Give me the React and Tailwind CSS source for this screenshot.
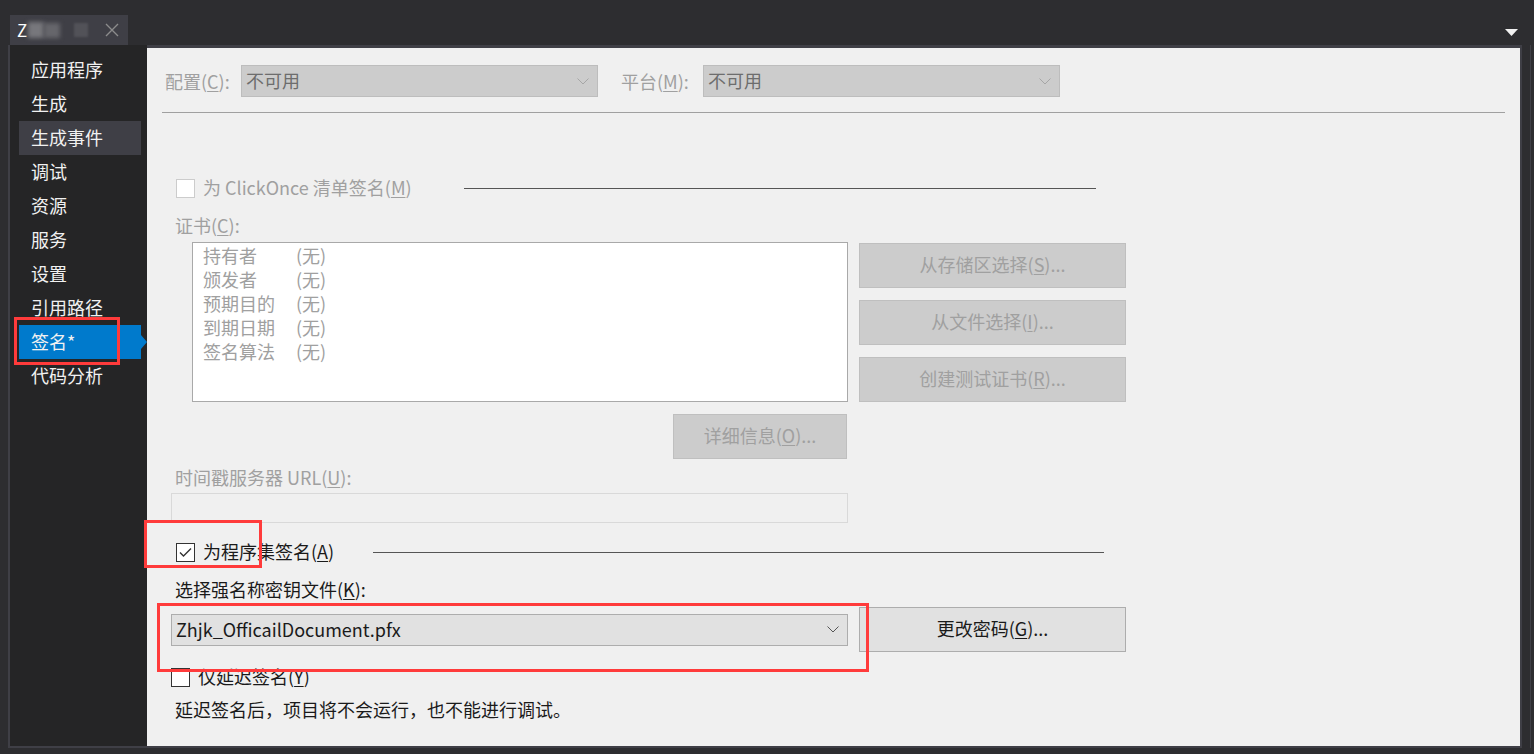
import React from "react";

const navItems = ["应用程序", "生成", "生成事件", "调试", "资源", "服务", "设置", "引用路径", "签名*", "代码分析"];

const certRows = [
  ["持有者", "(无)"],
  ["颁发者", "(无)"],
  ["预期目的", "(无)"],
  ["到期日期", "(无)"],
  ["签名算法", "(无)"],
];

function Chevron({ color }) {
  return (
    <svg width="12" height="7" viewBox="0 0 12 7" className="shrink-0">
      <polyline points="0.5,0.5 6,6 11.5,0.5" fill="none" stroke={color} strokeWidth="1" />
    </svg>
  );
}

function Combo({ w, text, disabled }) {
  return (
    <div
      className={`h-[32px] ${w} flex items-center justify-between pl-[4px] pr-[8px] border ${
        disabled ? "bg-[#cccccc] border-[#bdbdbd] text-[#6d6d6d]" : "bg-[#e1e1e1] border-[#adadad] text-[#1a1a1a]"
      }`}
    >
      <span className="leading-[30px] -translate-y-px">{text}</span>
      <Chevron color={disabled ? "#a6a6a6" : "#555555"} />
    </div>
  );
}

function Button({ children, disabled, w = "w-[267px]" }) {
  return (
    <div
      className={`h-[45px] ${w} flex items-center justify-center border ${
        disabled ? "bg-[#cccccc] border-[#bfbfbf] text-[#a0a0a0]" : "bg-[#e1e1e1] border-[#adadad] text-[#1a1a1a]"
      }`}
    >
      <span className="-translate-y-px">{children}</span>
    </div>
  );
}

function Check({ checked, disabled }) {
  return (
    <div
      className={`w-[19px] h-[19px] shrink-0 border flex items-center justify-center ${
        disabled ? "bg-white border-[#cccccc]" : "bg-white border-[#333333]"
      }`}
    >
      {checked && (
        <svg width="13" height="11" viewBox="0 0 13 11">
          <polyline points="1,5.5 4.5,9 12,1.5" fill="none" stroke="#333333" strokeWidth="1.4" />
        </svg>
      )}
    </div>
  );
}

export default function App() {
  return (
    <div className="w-[1534px] h-[754px] bg-[#2d2d30] flex flex-col overflow-hidden relative font-['Noto_Sans_CJK_SC',sans-serif] text-[18px]">
      {/* 顶部标签 */}
      <div className="h-[45px] flex items-end justify-between shrink-0">
        <div className="ml-[10px] w-[118px] h-[30px] bg-[#3f3f46] flex items-center pl-[7px]">
          <span className="text-white text-[17px] leading-[30px]">Z</span>
          <span className="ml-[1px] w-[16px] h-[16px] bg-[#77777c] blur-[2px]" />
          <span className="w-[16px] h-[15px] bg-[#66666b] blur-[2px]" />
          <span className="ml-[14px] w-[14px] h-[14px] bg-[#525258] blur-[1px]" />
          <svg width="14" height="14" viewBox="0 0 14 14" className="ml-[17px]">
            <path d="M1 1 L13 13 M13 1 L1 13" stroke="#8c8c8c" strokeWidth="1.4" />
          </svg>
        </div>
        <svg width="13" height="7" viewBox="0 0 13 7" className="mb-[9px] mr-[16px]">
          <polygon points="0,0 13,0 6.5,7" fill="#f1f1f1" />
        </svg>
      </div>

      <div className="flex h-[703px]">
        <div className="ml-[8px] w-[1514px] h-full bg-[#3f3f46] pl-[2px] pr-[2px] pb-[2px] flex">
          {/* 侧边栏 */}
          <div className="w-[137px] h-full bg-[#252526] pt-[8px] flex flex-col">
            {navItems.map((item) => {
              const active = item === "签名*";
              const hover = item === "生成事件";
              return (
                <div
                  key={item}
                  className={`relative ml-[9px] w-[122px] h-[34px] flex items-center pl-[12px] text-[#f1f1f1] ${
                    active ? "bg-[#007acc]" : hover ? "bg-[#3f3f46] w-[121px]" : ""
                  }`}
                >
                  <span className="leading-[34px] -translate-y-px">{item}</span>
                  {active && (
                    <svg width="6" height="14" viewBox="0 0 6 14" className="absolute right-[-6px] top-[10px]">
                      <polygon points="0,0 6,7 0,14" fill="#007acc" />
                    </svg>
                  )}
                </div>
              );
            })}
          </div>

          {/* 内容区 */}
          <div className="mt-[3px] w-[1373px] h-[698px] bg-[#f0f0f0] pt-[17px] pl-[15px] pr-[15px]">
            <div className="flex items-center h-[32px]">
              <span className="ml-[3px] w-[76px] text-[#a0a0a0]">
                配置(<u className="underline-offset-2">C</u>):
              </span>
              <Combo w="w-[357px]" text="不可用" disabled />
              <span className="ml-[23px] w-[82px] text-[#a0a0a0]">
                平台(<u className="underline-offset-2">M</u>):
              </span>
              <Combo w="w-[357px]" text="不可用" disabled />
            </div>
            <div className="mt-[15px] h-px bg-[#a0a0a0]" />

            {/* ClickOnce */}
            <div className="mt-[65px] ml-[14px] flex items-center h-[20px]">
              <Check disabled />
              <span className="ml-[8px] w-[261px] text-[#a0a0a0] leading-[20px] -translate-y-px">
                为 ClickOnce 清单签名(<u className="underline-offset-2">M</u>)
              </span>
              <div className="w-[632px] h-px bg-[#555555]" />
            </div>

            <div className="mt-[15px] ml-[13px] leading-[24px] text-[#a0a0a0]">
              证书(<u className="underline-offset-2">C</u>):
            </div>

            <div className="mt-[5px] flex">
              <div className="ml-[30px] w-[656px] flex flex-col">
                <div className="h-[160px] bg-white border border-[#a9a9a9] pl-[10px] text-[#a0a0a0]">
                  {certRows.map(([k, v]) => (
                    <div key={k} className="flex h-[24px] leading-[24px]">
                      <span className="w-[93px]">{k}</span>
                      <span>{v}</span>
                    </div>
                  ))}
                </div>
                <div className="mt-[12px] flex justify-end pr-[1px]">
                  <Button disabled w="w-[174px]">
                    详细信息(<u className="underline-offset-2">O</u>)...
                  </Button>
                </div>
              </div>
              <div className="ml-[11px] mt-[1px] flex flex-col gap-[12px]">
                <Button disabled>
                  从存储区选择(<u className="underline-offset-2">S</u>)...
                </Button>
                <Button disabled>
                  从文件选择(<u className="underline-offset-2">I</u>)...
                </Button>
                <Button disabled>
                  创建测试证书(<u className="underline-offset-2">R</u>)...
                </Button>
              </div>
            </div>

            <div className="mt-[6px] ml-[13px] leading-[24px] text-[#a0a0a0]">
              时间戳服务器 URL(<u className="underline-offset-2">U</u>):
            </div>
            <div className="mt-[4px] ml-[9px] w-[677px] h-[30px] bg-[#f0f0f0] border border-[#d9d9d9]" />

            {/* 程序集签名 */}
            <div className="mt-[19px] ml-[14px] flex items-center h-[20px]">
              <Check checked />
              <span className="ml-[8px] w-[170px] text-[#1a1a1a] leading-[20px] -translate-y-px">
                为程序集签名(<u className="underline-offset-2">A</u>)
              </span>
              <div className="w-[731px] h-px bg-[#555555]" />
            </div>

            <div className="mt-[15px] ml-[13px] leading-[24px] text-[#1a1a1a]">
              选择强名称密钥文件(<u className="underline-offset-2">K</u>):
            </div>

            <div className="mt-[6px] ml-[9px] flex items-center">
              <Combo w="w-[677px]" text="Zhjk_OfficailDocument.pfx" />
              <div className="ml-[11px]">
                <Button>
                  更改密码(<u className="underline-offset-2">G</u>)...
                </Button>
              </div>
            </div>

            <div className="mt-[15px] ml-[9px] flex items-center h-[20px]">
              <Check />
              <span className="ml-[8px] text-[#1a1a1a] leading-[20px] -translate-y-px">
                仅延迟签名(<u className="underline-offset-2">Y</u>)
              </span>
            </div>

            <div className="mt-[10px] ml-[13px] leading-[24px] text-[#1a1a1a]">
              延迟签名后，项目将不会运行，也不能进行调试。
            </div>
          </div>
        </div>
        <div className="ml-[8px] w-px h-full bg-[#3f3f46]" />
      </div>

      {/* 红色标注框 */}
      <div className="absolute left-[14px] top-[317px] w-[106px] h-[48px] border-[3px] border-[#ff3b3b]" />
      <div className="absolute left-[144px] top-[520px] w-[118px] h-[48px] border-[3px] border-[#ff3b3b]" />
      <div className="absolute left-[157px] top-[603px] w-[712px] h-[69px] border-[3px] border-[#ff3b3b]" />
    </div>
  );
}
